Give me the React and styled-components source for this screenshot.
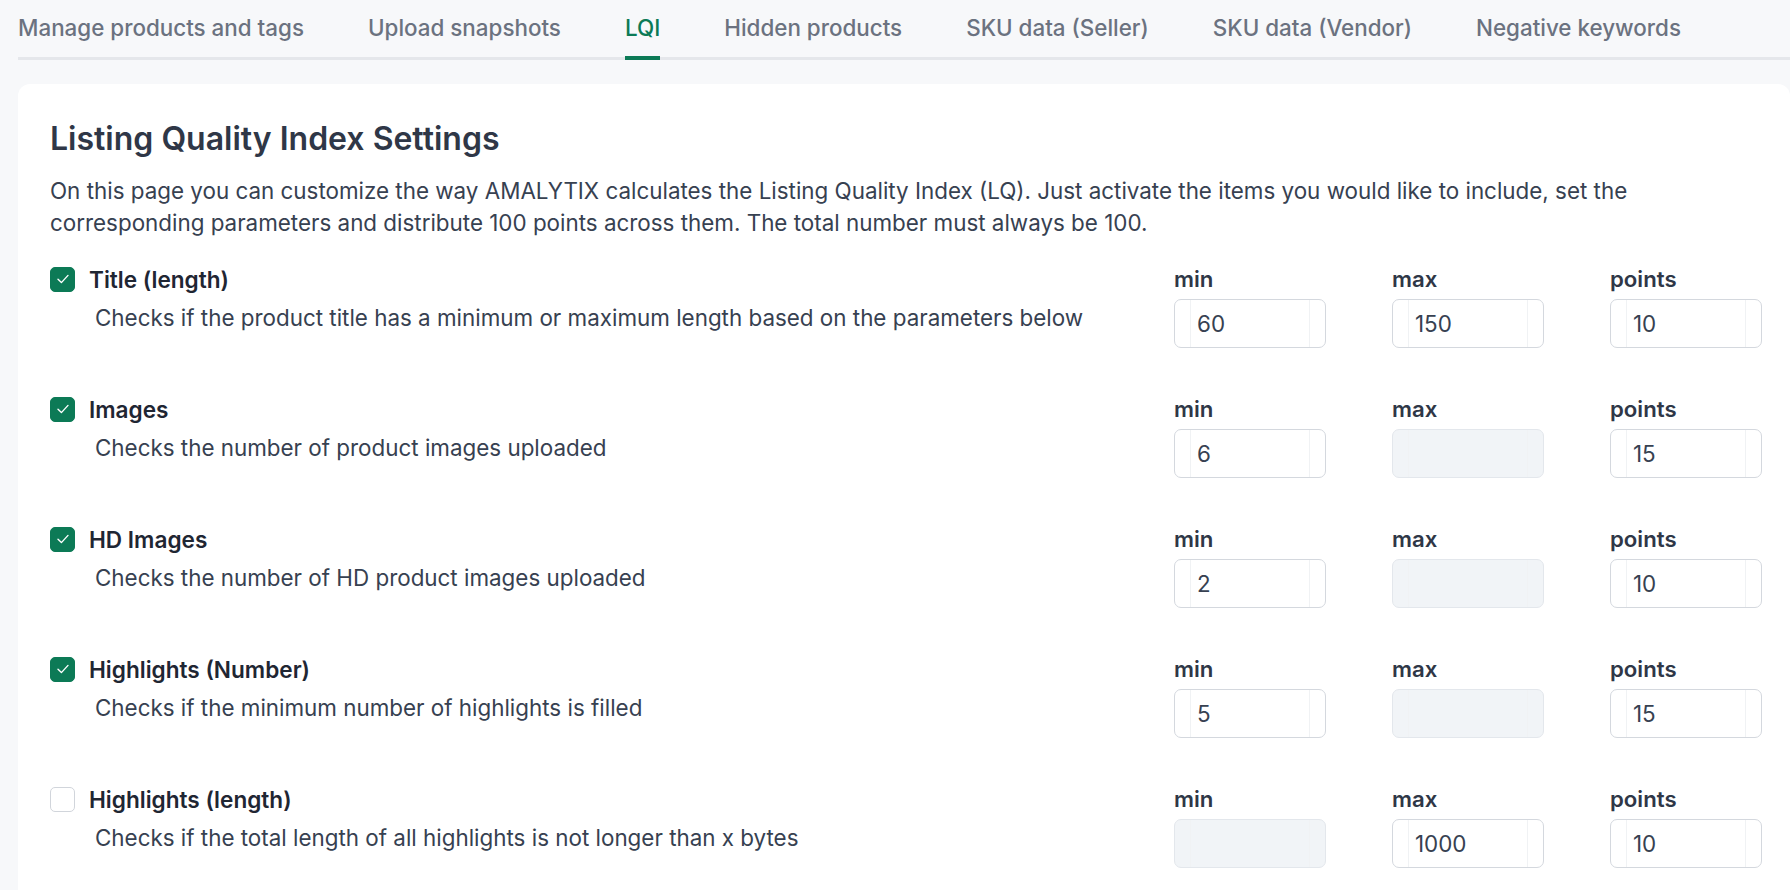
import React from "react";
import styled, { createGlobalStyle } from "styled-components";

const GlobalStyle = createGlobalStyle`
  html, body {
    margin: 0;
    padding: 0;
    background: #f7f8fa;
    font-family: Inter, "Noto Sans", sans-serif;
    overflow: hidden;
  }
  * { box-sizing: border-box; }
`;

const Page = styled.div`
  padding-left: 18px;
  min-height: 890px;
`;

const Tabs = styled.nav`
  display: flex;
  gap: 64px;
  box-shadow: inset 0 -3px 0 #e5e7eb;
`;

const Tab = styled.a`
  padding: 15px 0 16px;
  font-size: 22.4px;
  line-height: 25px;
  font-weight: 500;
  color: ${({ active }) => (active ? "#0c7a56" : "#6b7280")};
  border-bottom: 4px solid ${({ active }) => (active ? "#0c7a56" : "transparent")};
  white-space: nowrap;
  cursor: pointer;
`;

const Card = styled.section`
  margin-top: 24px;
  background: #fff;
  border-radius: 12px 12px 0 0;
  padding: 35px 28px 60px 32px;
`;

const Title = styled.h1`
  margin: 0;
  font-size: 32px;
  line-height: 40px;
  font-weight: 600;
  color: #2f3747;
`;

const Intro = styled.p`
  margin: 16px 0 0;
  font-size: 22.4px;
  line-height: 32px;
  color: #374151;
`;

const Rows = styled.div`
  margin-top: 26px;
  display: flex;
  flex-direction: column;
  gap: 47px;
`;

const Row = styled.div`
  display: grid;
  grid-template-columns: 1fr 152px 152px 152px;
  column-gap: 66px;
`;

const Info = styled.div`
  display: flex;
  flex-direction: column;
`;

const Head = styled.label`
  display: flex;
  align-items: center;
  gap: 14px;
  height: 28px;
`;

const Box = styled.span`
  width: 25px;
  height: 25px;
  border-radius: 5px;
  display: flex;
  align-items: center;
  justify-content: center;
  background: ${({ checked }) => (checked ? "#0c7a56" : "#fff")};
  border: 1px solid ${({ checked }) => (checked ? "#0c7a56" : "#d1d5db")};
`;

const Name = styled.span`
  font-size: 22.6px;
  font-weight: 600;
  color: #1f2633;
`;

const Desc = styled.div`
  margin-top: 11px;
  padding-left: 45px;
  font-size: 22.4px;
  line-height: 28px;
  color: #374151;
`;

const Field = styled.div`
  display: flex;
  flex-direction: column;
  gap: 6px;
`;

const FieldLabel = styled.span`
  font-size: 22.2px;
  line-height: 28px;
  font-weight: 600;
  color: #2f3747;
`;

const InputGroup = styled.div`
  display: flex;
  height: 49px;
  border: 1px solid ${({ disabled }) => (disabled ? "#e3e7ec" : "#d4d8de")};
  border-radius: 7px;
  background: ${({ disabled }) => (disabled ? "#f1f4f7" : "#fff")};
  overflow: hidden;
`;

const Addon = styled.span`
  width: 16px;
  flex: none;
  border-${({ side }) => (side === "left" ? "right" : "left")}: 1px solid #f0f2f4;
`;

const Input = styled.input`
  flex: 1;
  min-width: 0;
  border: 0;
  outline: none;
  background: transparent;
  padding: 0 0 0 6px;
  font-family: Inter, "Noto Sans", sans-serif;
  font-size: 22.4px;
  color: #374151;
`;

const tabs = [
  "Manage products and tags",
  "Upload snapshots",
  "LQI",
  "Hidden products",
  "SKU data (Seller)",
  "SKU data (Vendor)",
  "Negative keywords",
];

const items = [
  { name: "Title (length)", desc: "Checks if the product title has a minimum or maximum length based on the parameters below", on: true, min: "60", max: "150", points: "10" },
  { name: "Images", desc: "Checks the number of product images uploaded", on: true, min: "6", max: null, points: "15" },
  { name: "HD Images", desc: "Checks the number of HD product images uploaded", on: true, min: "2", max: null, points: "10" },
  { name: "Highlights (Number)", desc: "Checks if the minimum number of highlights is filled", on: true, min: "5", max: null, points: "15" },
  { name: "Highlights (length)", desc: "Checks if the total length of all highlights is not longer than x bytes", on: false, min: null, max: "1000", points: "10" },
];

const Check = () => (
  <svg width="16" height="16" viewBox="0 0 16 16" fill="none">
    <path d="M3 8.3 L6.4 11.6 L13 4.4" stroke="#fff" strokeWidth="1.4" strokeLinecap="round" strokeLinejoin="round" />
  </svg>
);

const NumberField = ({ label, value }) => (
  <Field>
    <FieldLabel>{label}</FieldLabel>
    <InputGroup disabled={value == null}>
      <Addon side="left" />
      <Input defaultValue={value ?? ""} disabled={value == null} />
      <Addon side="right" />
    </InputGroup>
  </Field>
);

export default function App() {
  return (
    <Page>
      <GlobalStyle />
      <Tabs>
        {tabs.map((t, i) => (
          <Tab key={t} active={i === 2}>{t}</Tab>
        ))}
      </Tabs>
      <Card>
        <Title>Listing Quality Index Settings</Title>
        <Intro>
          On this page you can customize the way AMALYTIX calculates the Listing Quality Index (LQ). Just activate the items you would like to include, set the corresponding parameters and distribute 100 points across them. The total number must always be 100.
        </Intro>
        <Rows>
          {items.map((it) => (
            <Row key={it.name}>
              <Info>
                <Head>
                  <Box checked={it.on}>{it.on && <Check />}</Box>
                  <Name>{it.name}</Name>
                </Head>
                <Desc>{it.desc}</Desc>
              </Info>
              <NumberField label="min" value={it.min} />
              <NumberField label="max" value={it.max} />
              <NumberField label="points" value={it.points} />
            </Row>
          ))}
        </Rows>
      </Card>
    </Page>
  );
}
